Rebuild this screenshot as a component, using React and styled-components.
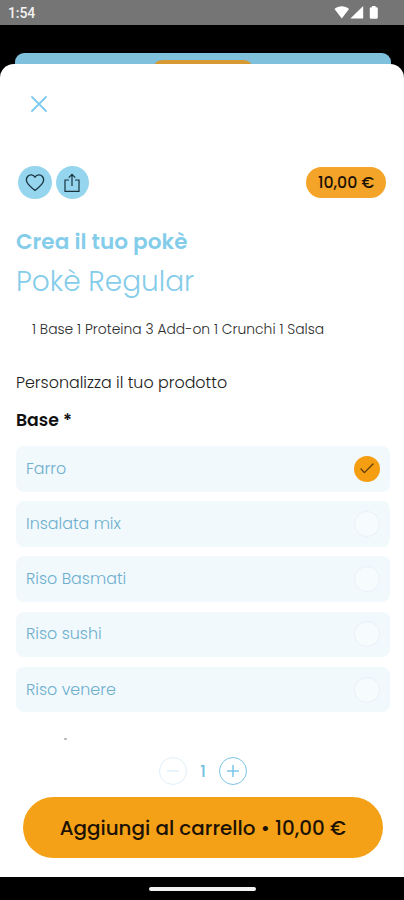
import styled, { createGlobalStyle } from 'styled-components';

const App = () => {
    return (
        <>
            <GlobalStyle/>
            <Screen>
                <StatusBar>
                    <Clock>1:54</Clock>
                    <StatusIcons/>
                </StatusBar>
                <Backdrop>
                    <BackCard>
                        <BackTab/>
                    </BackCard>
                </Backdrop>
                <Sheet>
                    <CloseButton aria-label="Chiudi">
                        <svg width="16" height="16" viewBox="0 0 16 16" fill="none" stroke="#7fcbee" strokeWidth="1.8" strokeLinecap="round">
                            <path d="M1 1L15 15M15 1L1 15"/>
                        </svg>
                    </CloseButton>
                    <ActionRow>
                        <RoundButton aria-label="Preferiti">
                            <svg width="20" height="18" viewBox="0 0 20 18" fill="none" stroke="#18333e" strokeWidth="1.3" strokeLinejoin="round">
                                <path d="M10 3.2C8.2.1 4.4.3 2.6 2.5C.8 4.8 1.2 7.7 3.2 10.1C5 12.3 7.6 14.6 10 16.4C12.4 14.6 15 12.3 16.8 10.1C18.8 7.7 19.2 4.8 17.4 2.5C15.6.3 11.8.1 10 3.2Z"/>
                            </svg>
                        </RoundButton>
                        <RoundButton aria-label="Condividi">
                            <svg width="18" height="20" viewBox="0 0 18 20" fill="none" stroke="#18333e" strokeWidth="1.2">
                                <path d="M6 7H2V18.4H16V7H12M9 13V1.6M5.8 4.6L9 1.4L12.2 4.6"/>
                            </svg>
                        </RoundButton>
                        <PriceTag>10,00 €</PriceTag>
                    </ActionRow>
                    <Category>Crea il tuo pokè</Category>
                    <ProductName>Pokè Regular</ProductName>
                    <Description>1 Base 1 Proteina 3 Add-on 1 Crunchi 1 Salsa</Description>
                    <Hint>Personalizza il tuo prodotto</Hint>
                    <GroupTitle>Base *</GroupTitle>
                    <OptionList>
                        {options.map((item) =>
                            <Option key={item.name}>
                                <OptionName>{item.name}</OptionName>
                                <Radio $checked={item.checked}>
                                    {item.checked &&
                                        <svg width="14" height="11" viewBox="0 0 14 11" fill="none" stroke="#5b3d0c" strokeWidth="1.3" strokeLinecap="round" strokeLinejoin="round">
                                            <path d="M1 6L4.4 9.6L13 1"/>
                                        </svg>}
                                </Radio>
                            </Option>
                        )}
                    </OptionList>
                    <Speck/>
                    <Stepper>
                        <StepButton $disabled aria-label="Meno">
                            <svg width="14" height="14" viewBox="0 0 14 14" stroke="currentColor" strokeWidth="1.5">
                                <path d="M1 7H13"/>
                            </svg>
                        </StepButton>
                        <Quantity>1</Quantity>
                        <StepButton aria-label="Più">
                            <svg width="14" height="14" viewBox="0 0 14 14" stroke="currentColor" strokeWidth="1.5">
                                <path d="M1 7H13M7 1V13"/>
                            </svg>
                        </StepButton>
                    </Stepper>
                    <CartButton>Aggiungi al carrello • 10,00 €</CartButton>
                </Sheet>
                <NavBar>
                    <NavHandle/>
                </NavBar>
            </Screen>
        </>
    )
}

const StatusIcons = () => (
    <svg width="45" height="16" viewBox="0 0 45 16" fill="#fff">
        <path d="M0.5 4C4.5 0.4 11 0.4 15 4L7.8 13.6Z"/>
        <path d="M29.2 1V13.6H16.4Z"/>
        <path d="M38 1H41.6V2.3H42.4Q43.8 2.3 43.8 3.7V12.4Q43.8 13.8 42.4 13.8H37.2Q35.8 13.8 35.8 12.4V3.7Q35.8 2.3 37.2 2.3H38Z"/>
    </svg>
)

const options = [
    { name: "Farro", checked: true },
    { name: "Insalata mix" },
    { name: "Riso Basmati" },
    { name: "Riso sushi" },
    { name: "Riso venere" },
];

const GlobalStyle = createGlobalStyle`
    body {
        margin: 0;
        background-color: #000;
        font-family: Poppins, Inter, sans-serif;
    }
    * {
        box-sizing: border-box;
    }
    button {
        font-family: inherit;
        border: none;
        padding: 0;
        cursor: pointer;
    }
    svg {
        display: block;
        flex-shrink: 0;
    }
`;

const Screen = styled.div`
    width: 404px;
    height: 900px;
    display: flex;
    flex-direction: column;
    background-color: #000;
    overflow: hidden;
`;

const StatusBar = styled.div`
    height: 24.5px;
    flex-shrink: 0;
    display: flex;
    justify-content: space-between;
    padding: 5px 25.5px 0 8px;
    background-color: #757575;
`;

const Clock = styled.span`
    font-family: Roboto, sans-serif;
    font-size: 14px;
    line-height: 17px;
    font-weight: 500;
    letter-spacing: -0.1px;
    color: #f2f2f2;
`;

const Backdrop = styled.div`
    height: 39px;
    flex-shrink: 0;
    padding: 28.5px 13px 0 14.5px;
`;

const BackCard = styled.div`
    height: 24px;
    padding-top: 7px;
    border-radius: 9px 9px 0 0;
    background-color: #7fc1dc;
`;

const BackTab = styled.div`
    width: 100px;
    height: 17px;
    margin: 0 auto;
    border-radius: 9px 9px 0 0;
    background-color: #d79a32;
`;

const Sheet = styled.main`
    position: relative;
    height: 813.5px;
    flex-shrink: 0;
    display: flex;
    flex-direction: column;
    border-radius: 14px 14px 0 0;
    background-color: #fff;
`;

const CloseButton = styled.button`
    width: 16px;
    height: 16px;
    margin: 32.5px 0 0 31px;
    background: none;
`;

const ActionRow = styled.div`
    display: flex;
    align-items: center;
    gap: 4px;
    height: 34px;
    margin: 53.5px 18px 0 18px;
`;

const RoundButton = styled.button`
    width: 33.5px;
    height: 33.5px;
    display: flex;
    align-items: center;
    justify-content: center;
    border-radius: 50%;
    background-color: #96d5ee;
`;

const PriceTag = styled.div`
    width: 80px;
    height: 31.5px;
    margin-left: auto;
    border-radius: 16px;
    background-color: #f4a428;
    color: #1c1204;
    font-size: 15.8px;
    font-weight: 500;
    line-height: 32px;
    text-align: center;
`;

const Category = styled.h2`
    margin: 27px 0 0 16px;
    font-size: 21.6px;
    line-height: 30px;
    font-weight: 600;
    color: #84cdea;
    white-space: nowrap;
`;

const ProductName = styled.h1`
    margin: 7px 0 0 16px;
    font-size: 28px;
    line-height: 36px;
    font-weight: 300;
    color: #84cdea;
    white-space: nowrap;
`;

const Description = styled.p`
    margin: 19px 0 0 32px;
    font-size: 13.9px;
    line-height: 20px;
    font-weight: 300;
    color: #2e2e2e;
    white-space: nowrap;
`;

const Hint = styled.p`
    margin: 32px 0 0 16px;
    font-size: 15.9px;
    line-height: 24px;
    font-weight: 300;
    color: #222;
    white-space: nowrap;
`;

const GroupTitle = styled.h3`
    margin: 13px 0 0 16px;
    font-size: 17.3px;
    line-height: 24px;
    font-weight: 600;
    color: #111;
`;

const OptionList = styled.div`
    display: flex;
    flex-direction: column;
    gap: 9.7px;
    margin: 14.5px 14px 0 16px;
`;

const Option = styled.div`
    height: 45.5px;
    display: flex;
    align-items: center;
    justify-content: space-between;
    padding: 0 10px;
    border-radius: 8px;
    background-color: #f1f9fd;
`;

const OptionName = styled.span`
    font-size: 15.9px;
    line-height: 22px;
    font-weight: 300;
    color: #6eafcd;
`;

const Radio = styled.span`
    width: 26px;
    height: 26px;
    display: flex;
    align-items: center;
    justify-content: center;
    border-radius: 50%;
    border: ${(props) => props.$checked ? "none" : "1px solid #e9f2f8"};
    background-color: ${(props) => props.$checked ? "#f59e12" : "#f6fbfe"};
`;

/* only the very top of the next group title shows above the footer */
const Speck = styled.div`
    width: 3px;
    height: 2px;
    margin: 26px 0 0 64px;
    border-radius: 1px;
    background-color: #b4b4b4;
`;

const Stepper = styled.div`
    display: flex;
    align-items: center;
    justify-content: center;
    height: 28px;
    margin-top: 17px;
    padding-left: 2px;
`;

const StepButton = styled.button`
    width: 28px;
    height: 28px;
    display: flex;
    align-items: center;
    justify-content: center;
    border-radius: 50%;
    border: 1.8px solid currentColor;
    background: none;
    color: ${(props) => props.$disabled ? "#e0f1f8" : "#7bc6e6"};
`;

const Quantity = styled.span`
    width: 32px;
    font-size: 16px;
    line-height: 29px;
    font-weight: 500;
    text-align: center;
    color: #73bfe0;
`;

const CartButton = styled.button`
    height: 61px;
    margin: 12px 21.5px 0 23px;
    border-radius: 31px;
    background-color: #f5a118;
    color: #1c1204;
    font-size: 19.9px;
    font-weight: 500;
    white-space: nowrap;
`;

const NavBar = styled.div`
    flex: 1;
    display: flex;
    justify-content: center;
    padding-top: 9.5px;
    background-color: #000;
`;

const NavHandle = styled.div`
    width: 107px;
    height: 4.5px;
    border-radius: 3px;
    background-color: #f2f2f2;
`;

export default App;
